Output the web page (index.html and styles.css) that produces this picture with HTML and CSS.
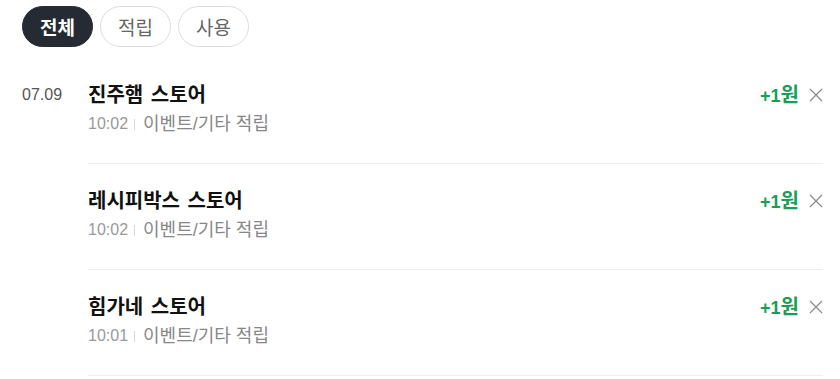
FILE: index.html
```html
<!DOCTYPE html>
<html lang="ko">
<head>
    <meta charset="UTF-8">
    <meta name="viewport" content="width=device-width, initial-scale=1.0">
    <title>포인트 내역</title>
    <link rel="stylesheet" href="styles.css">
</head>
<body>
    <div class="tabs">
        <button class="tab active">전체</button>
        <button class="tab">적립</button>
        <button class="tab">사용</button>
    </div>

    <ul class="history">
        <li class="row">
            <div class="date">07.09</div>
            <div class="item">
                <div class="info">
                    <div class="title">진주햄 스토어</div>
                    <div class="sub"><span class="time">10:02</span><span class="bar"></span><span class="desc">이벤트/기타 적립</span></div>
                </div>
                <div class="amount">+1<span class="won">원</span></div>
                <button class="remove" aria-label="삭제">
                    <svg width="14" height="14" viewBox="0 0 14 14"><path d="M1 1L13 13M13 1L1 13" stroke="#8a8a8a" stroke-width="1.2"/></svg>
                </button>
            </div>
        </li>
        <li class="row">
            <div class="date"></div>
            <div class="item">
                <div class="info">
                    <div class="title">레시피박스 스토어</div>
                    <div class="sub"><span class="time">10:02</span><span class="bar"></span><span class="desc">이벤트/기타 적립</span></div>
                </div>
                <div class="amount">+1<span class="won">원</span></div>
                <button class="remove" aria-label="삭제">
                    <svg width="14" height="14" viewBox="0 0 14 14"><path d="M1 1L13 13M13 1L1 13" stroke="#8a8a8a" stroke-width="1.2"/></svg>
                </button>
            </div>
        </li>
        <li class="row">
            <div class="date"></div>
            <div class="item">
                <div class="info">
                    <div class="title">힘가네 스토어</div>
                    <div class="sub"><span class="time">10:01</span><span class="bar"></span><span class="desc">이벤트/기타 적립</span></div>
                </div>
                <div class="amount">+1<span class="won">원</span></div>
                <button class="remove" aria-label="삭제">
                    <svg width="14" height="14" viewBox="0 0 14 14"><path d="M1 1L13 13M13 1L1 13" stroke="#8a8a8a" stroke-width="1.2"/></svg>
                </button>
            </div>
        </li>
    </ul>
</body>
</html>
```

FILE: styles.css
```css
body {
    font-family: 'Liberation Sans', 'Noto Sans CJK KR', sans-serif;
    margin: 0;
    padding: 6px 17px 0 22px;
    background: #fff;
    color: #111;
}
.tabs {
    display: flex;
    gap: 7px;
}
.tab {
    width: 71px;
    height: 41px;
    border: 1px solid #dcdcdc;
    border-radius: 21px;
    background: #fff;
    color: #666;
    font-family: inherit;
    font-size: 19px;
    padding: 0;
    cursor: pointer;
}
.tab.active {
    background: #262b33;
    border-color: #262b33;
    color: #fff;
    font-weight: bold;
}
.history {
    list-style: none;
    margin: 11px 0 0;
    padding: 0;
}
.row {
    display: flex;
}
.date {
    width: 66px;
    flex-shrink: 0;
    padding-top: 25px;
    font-size: 16px;
    line-height: 24px;
    color: #555;
}
.item {
    flex: 1;
    display: flex;
    align-items: flex-start;
    padding: 25px 0 28px;
    border-bottom: 1px solid #eeeeee;
}
.info {
    flex: 1;
}
.title {
    font-size: 20px;
    font-weight: bold;
    line-height: 24px;
    color: #111;
    word-spacing: 2px;
}
.sub {
    margin-top: 6px;
    font-size: 16px;
    line-height: 22px;
    color: #888;
    display: flex;
    align-items: center;
}
.time {
    color: #999;
}
.desc {
    font-size: 18px;
}
.bar {
    width: 1px;
    height: 11px;
    background: #d8d8d8;
    margin: 1px 8px 0 6px;
}
.amount {
    font-size: 18px;
    font-weight: bold;
    line-height: 24px;
    color: #1a9e56;
}
.won {
    font-size: 20px;
}
.remove {
    border: none;
    background: none;
    padding: 0;
    margin: 5px 0 0 10px;
    width: 14px;
    height: 14px;
    cursor: pointer;
}
.remove svg {
    display: block;
}
```
